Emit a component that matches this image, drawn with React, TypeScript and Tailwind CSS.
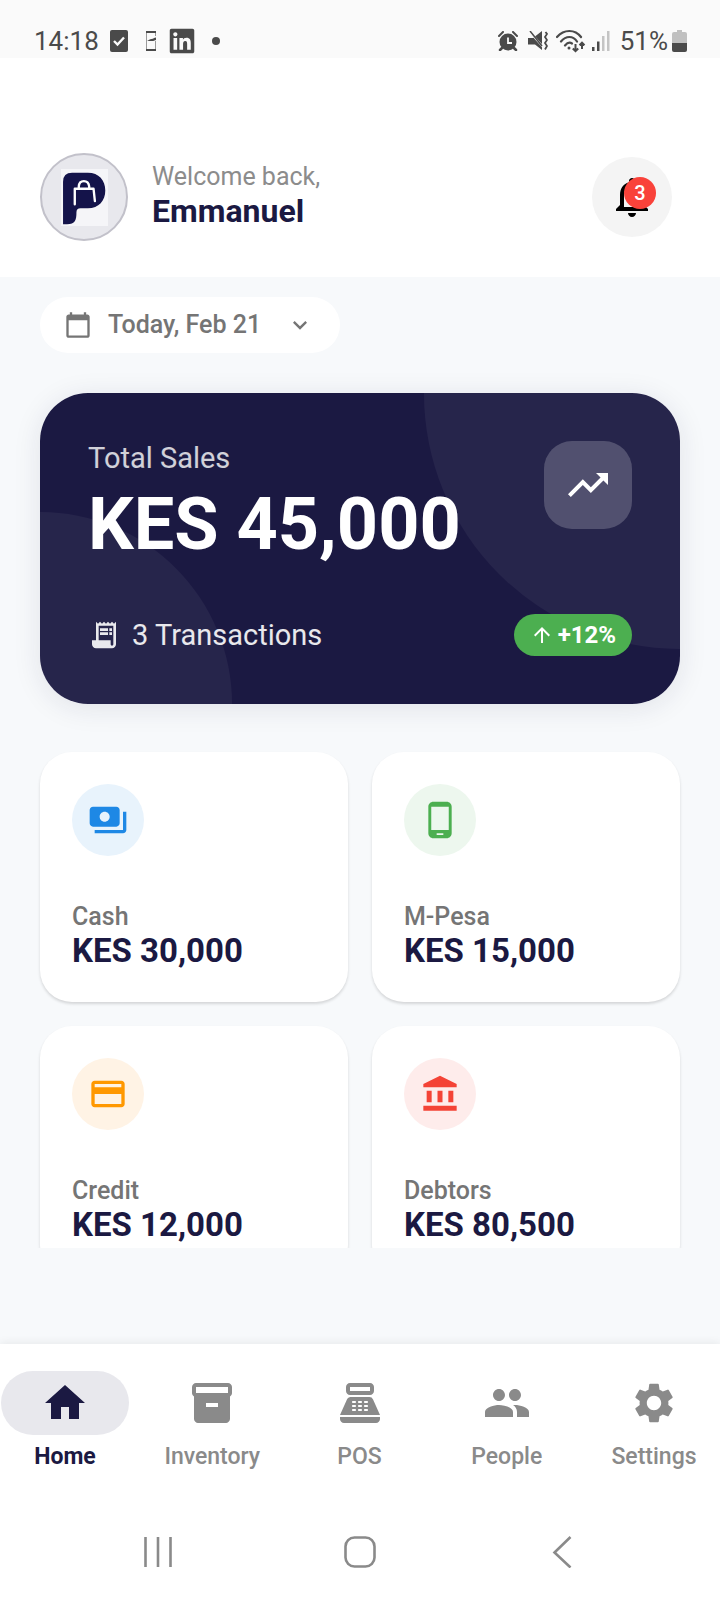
import type { ReactNode } from "react";
import type { IconType } from "react-icons";
import { FaLinkedin } from "react-icons/fa";
import {
  MdAccountBalance,
  MdArrowUpward,
  MdCalendarToday,
  MdHome,
  MdInventory2,
  MdKeyboardArrowDown,
  MdNotificationsNone,
  MdOutlinePayment,
  MdPayments,
  MdPeople,
  MdPhoneAndroid,
  MdPointOfSale,
  MdReceiptLong,
  MdSettings,
  MdTrendingUp,
} from "react-icons/md";

type Method = { label: string; amount: string; icon: IconType; tint: string };

const methods: Method[] = [
  { label: "Cash", amount: "KES 30,000", icon: MdPayments, tint: "bg-[#e8f3fc] text-[#1e88e5]" },
  { label: "M-Pesa", amount: "KES 15,000", icon: MdPhoneAndroid, tint: "bg-[#edf7ee] text-[#4caf50]" },
  { label: "Credit", amount: "KES 12,000", icon: MdOutlinePayment, tint: "bg-[#fff3e5] text-[#ff9800]" },
  { label: "Debtors", amount: "KES 80,500", icon: MdAccountBalance, tint: "bg-[#feeceb] text-[#f44336]" },
];

const tabs: { label: string; icon: IconType; active?: boolean }[] = [
  { label: "Home", icon: MdHome, active: true },
  { label: "Inventory", icon: MdInventory2 },
  { label: "POS", icon: MdPointOfSale },
  { label: "People", icon: MdPeople },
  { label: "Settings", icon: MdSettings },
];

function StatusBar() {
  return (
    <div className="flex shrink-0 items-center justify-between bg-[#fafafa] pt-6 pr-[33px] pl-[34px] text-[26px] leading-[34px] text-[#4a4a4a]">
      <div className="flex items-center">
        <span>14:18</span>
        <svg className="ml-[11px] h-[22px] w-[18px]" viewBox="0 0 18 22" fill="none">
          <rect width="18" height="22" rx="2" fill="#4a4a4a" />
          <path d="M4 11l3.500 3.500L14 7.500" stroke="#fafafa" strokeWidth="2.400" />
        </svg>
        <svg className="ml-[18px] h-5 w-[10px]" viewBox="0 0 10 20" fill="none">
          <path d="M.5 1v18M9.500 1v4M9.500 10v9" stroke="#9a9a9a" />
          <path d="M0 1h10M0 19h10" stroke="#4a4a4a" strokeWidth="2" />
          <path d="M1 9.500c2 0 2.500-1.500 4.500-1.500S8 6.500 10 6.500v2.500c-2 1-3.500 1-5 1S2 10 1 9.500z" fill="#4a4a4a" />
        </svg>
        <FaLinkedin className="ml-3 size-7" />
        <span className="ml-4 size-2 rounded-full bg-[#4a4a4a]" />
      </div>
      <div className="flex items-center">
        <svg className="h-5 w-5" viewBox="0 0 20 20" fill="none">
          <circle cx="10" cy="11" r="8.500" fill="#4a4a4a" />
          <path d="M1 5l4-4M19 5l-4-4" stroke="#4a4a4a" strokeWidth="2" strokeLinecap="round" />
          <path d="M4 17l-2 2M16 17l2 2" stroke="#4a4a4a" strokeWidth="2.500" strokeLinecap="round" />
          <path d="M10 6.500V12h4" stroke="#fafafa" strokeWidth="1.800" />
        </svg>
        <svg className="ml-[10px] h-5 w-5" viewBox="0 0 20 20" fill="none">
          <path d="M0 7h5l9-7v19l-7-5.500H0z" fill="#4a4a4a" />
          <path d="M1 0l15 17" stroke="#fafafa" strokeWidth="2" />
          <path d="M2 0l12 15" stroke="#4a4a4a" strokeWidth="1.500" />
          <path d="M17.500 1l1.500 2-2 3 2 3-2 3 2 3-2 3.500" stroke="#4a4a4a" strokeWidth="1.800" />
        </svg>
        <svg className="ml-2 h-6 w-[30px]" viewBox="0 0 30 24" fill="none" stroke="#4a4a4a" strokeWidth="2.200">
          <path d="M1 8C8 0 19 0 25 8M5 12.500c5-6 12-6 16 0M9 16.500c2.500-3 5-3.300 7-2" strokeLinecap="round" />
          <circle cx="13" cy="19" r="1.500" fill="#4a4a4a" stroke="none" />
          <path d="M19.500 15v7M16.800 19.500l2.700 2.700 2.700-2.700M26 20v-6M23.500 16.200L26 13.700l2.500 2.500" strokeWidth="2" />
        </svg>
        <svg className="ml-[6px] h-5 w-[18px]" viewBox="0 0 18 20">
          <path d="M0 16h2.500v4H0zM5 10.500h2.500V20H5z" fill="#4a4a4a" />
          <path d="M10 5h2.500v15H10zM15 0h2.500v20H15z" fill="#c4c4c4" />
        </svg>
        <span className="ml-[10px]">51%</span>
        <svg className="ml-1 h-[22px] w-[15px]" viewBox="0 0 15 22">
          <path d="M5 0h5v2h3q2 0 2 2v9H0V4q0-2 2-2h3z" fill="#c0c0c0" />
          <path d="M0 13h15v7q0 2-2 2H2q-2 0-2-2z" fill="#4a4a4a" />
        </svg>
      </div>
    </div>
  );
}

function BrandMark() {
  return (
    <svg className="h-[57px] w-[47px]" viewBox="0 0 140 170" fill="none">
      <rect width="140" height="170" fill="#f5f5f8" />
      <path
        d="M6 38Q6 11 33 11H80C113 11 132 34 132 64S113 117 80 117H58Q46 117 46 129C46 152 42 165 18 165H6z"
        fill="#14134a"
      />
      <path
        d="M41 105V59H97L101 96M53 58V52Q54 36 68 36T84 52V58"
        stroke="#fff"
        strokeWidth="7"
        strokeLinecap="round"
        strokeLinejoin="round"
      />
    </svg>
  );
}

function Header() {
  return (
    <header className="flex shrink-0 items-center bg-white pt-[95px] pr-12 pb-9 pl-10">
      <div className="flex size-[88px] items-center justify-center rounded-full border-2 border-[#c2c1ca] bg-[#e8e8ed]">
        <BrandMark />
      </div>
      <div className="ml-6 flex-1 pb-1">
        <p className="text-[25px] leading-8 text-[#8c8c8c]">Welcome back,</p>
        <h1 className="text-[32px] leading-9 font-bold text-[#1b1942]">Emmanuel</h1>
      </div>
      <button
        type="button"
        aria-label="Notifications"
        className="flex size-20 items-center justify-center rounded-full bg-[#f4f4f4]"
      >
        <span className="relative text-black">
          <MdNotificationsNone className="size-12" />
          <span className="absolute top-1 right-0 flex size-8 items-center justify-center rounded-full bg-[#f9423a] text-[20px] leading-6 font-medium text-white">
            3
          </span>
        </span>
      </button>
    </header>
  );
}

function SalesCard() {
  return (
    <section className="relative mt-10 overflow-hidden rounded-[48px] bg-[#1b1942] p-12 text-white">
      <div className="absolute top-0 left-full aspect-square w-4/5 -translate-x-1/2 -translate-y-1/2 rounded-full bg-white/5" />
      <div className="absolute top-full left-0 aspect-square w-3/5 -translate-x-1/2 -translate-y-1/2 rounded-full bg-white/5" />
      <div className="relative flex items-start justify-between">
        <div>
          <h2 className="text-[29px] leading-[34px] text-white/80">Total Sales</h2>
          <p className="mt-2 text-[72px] leading-[84px] font-bold">KES 45,000</p>
        </div>
        <div className="flex size-[88px] items-center justify-center rounded-[28px] bg-white/20">
          <MdTrendingUp className="size-12" />
        </div>
      </div>
      <div className="relative mt-[47px] flex h-[42px] items-center justify-between">
        <p className="flex items-center gap-3 text-[29px] leading-[34px] text-white/90">
          <MdReceiptLong className="size-8" />
          3 Transactions
        </p>
        <p className="flex h-full items-center gap-1 rounded-full bg-[#4caf50] px-4 text-[24px] leading-7 font-bold">
          <MdArrowUpward className="size-6" />
          +12%
        </p>
      </div>
    </section>
  );
}

function MethodCard({ label, amount, icon: Icon, tint }: Method) {
  return (
    <article className="rounded-[32px] bg-white p-8 shadow-[0_2px_3px_rgba(0,0,0,0.14)]">
      <div className={`flex size-[72px] items-center justify-center rounded-full ${tint}`}>
        <Icon className="size-10" />
      </div>
      <h3 className="mt-[46px] text-[25px] leading-[30px] font-medium text-[#757575]">{label}</h3>
      <p className="text-[33px] leading-[38px] font-bold text-[#1b1942]">{amount}</p>
    </article>
  );
}

function SystemButton({ label, children }: { label: string; children: ReactNode }) {
  return (
    <button type="button" aria-label={label} className="flex h-24 w-24 items-center justify-center">
      <svg className="size-8" viewBox="0 0 32 32" fill="none" stroke="#8a8a8a" strokeWidth="2.600">
        {children}
      </svg>
    </button>
  );
}

export default function App() {
  return (
    <div className="flex h-screen flex-col bg-[#f7f9fb] font-[Roboto,'Liberation_Sans',sans-serif]">
      <StatusBar />
      <Header />
      <main className="mb-24 min-h-0 flex-1 overflow-y-auto px-10 pt-5 [scrollbar-width:none]">
        <button
          type="button"
          className="flex h-14 min-w-[300px] items-center rounded-full bg-white pr-[26px] pl-6 text-[25px] leading-7 font-medium text-[#757575]"
        >
          <MdCalendarToday className="size-7" />
          <span className="ml-4 flex-1 text-left">Today, Feb 21</span>
          <MdKeyboardArrowDown className="size-7" />
        </button>
        <div className="rounded-[48px] shadow-[0_4px_28px_rgba(27,25,66,0.1)]">
          <SalesCard />
        </div>
        <section className="mt-12 grid grid-cols-2 gap-6 pb-6">
          {methods.map((method) => (
            <MethodCard key={method.label} {...method} />
          ))}
        </section>
      </main>
      <nav className="flex h-40 shrink-0 items-start justify-between bg-white pt-[27px] pr-[2px] pl-px shadow-[0_-2px_8px_rgba(0,0,0,0.06)]">
        {tabs.map(({ label, icon: Icon, active }) => (
          <a
            key={label}
            href={`#${label.toLowerCase()}`}
            className={`flex w-32 flex-col items-center gap-2 ${active ? "text-[#1b1942]" : "text-[#8a8a8a]"}`}
          >
            <span
              className={`flex h-16 w-full items-center justify-center rounded-full ${active ? "bg-[#e8e8ed]" : ""}`}
            >
              <Icon className="size-12" />
            </span>
            <span className={`text-[23px] leading-7 ${active ? "font-bold" : "font-medium"}`}>{label}</span>
          </a>
        ))}
      </nav>
      <div className="z-10 flex shrink-0 justify-between bg-white px-[110px]">
        <SystemButton label="Recent apps">
          <path d="M3.500 1v30M16 1v30M28.500 1v30" />
        </SystemButton>
        <SystemButton label="Home screen">
          <rect x="1.500" y="1.500" width="29" height="29" rx="9" />
        </SystemButton>
        <SystemButton label="Back">
          <path d="M24.500 1L8.500 16.500l16 15" />
        </SystemButton>
      </div>
    </div>
  );
}
